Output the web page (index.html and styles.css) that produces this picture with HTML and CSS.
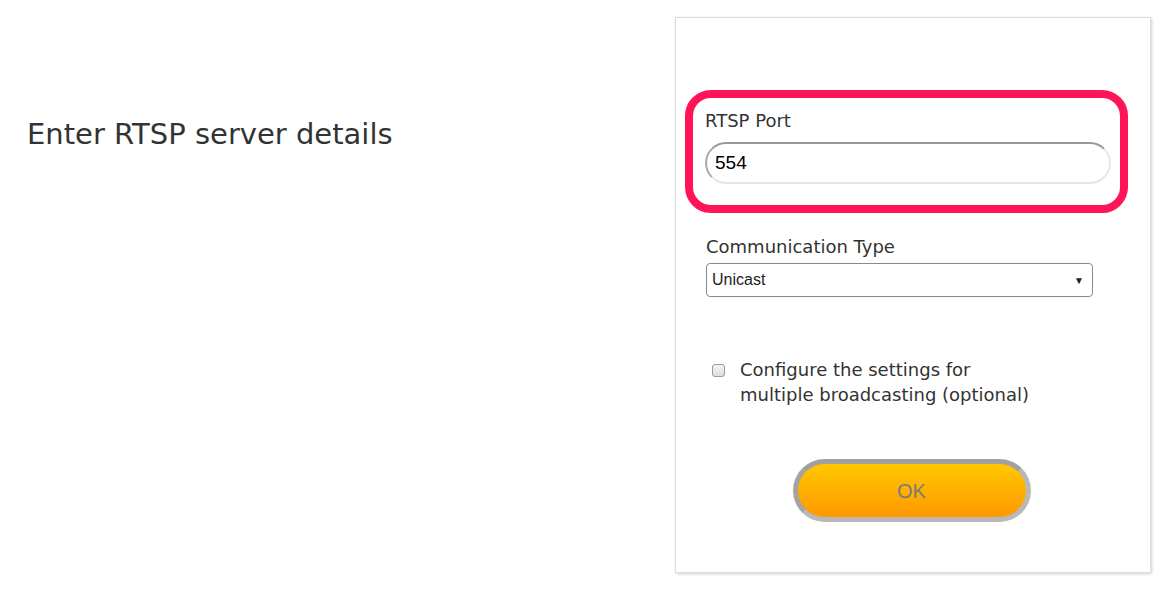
FILE: index.html
```html
<!DOCTYPE html>
<html>
<head>
<meta charset="utf-8">
<link rel="stylesheet" href="styles.css">
</head>
<body>
<div class="page">
  <div class="intro">
    <h1 class="title">Enter RTSP server details</h1>
  </div>
  <div class="panel">
    <div class="highlight">
      <label class="field-label" for="port">RTSP Port</label>
      <input class="text-input" id="port" type="text" value="554">
    </div>
    <div class="field">
      <div class="field-label">Communication Type</div>
      <div class="select">
        <span class="select-value">Unicast</span>
        <span class="select-arrow">▼</span>
      </div>
    </div>
    <div class="check-row">
      <span class="checkbox"></span>
      <span class="check-label">Configure the settings for<br>multiple broadcasting (optional)</span>
    </div>
    <div class="actions">
      <button class="ok-btn">OK</button>
    </div>
  </div>
</div>
</body>
</html>
```

FILE: styles.css
```css
html, body {
  margin: 0;
  padding: 0;
  background: #fff;
}
body {
  font-family: "DejaVu Sans", "Noto Sans", sans-serif;
  color: #333;
}
.page {
  display: flex;
  align-items: flex-start;
  width: 1169px;
  height: 597px;
}
.intro {
  width: 675px;
  flex: none;
}
.title {
  margin: 114px 0 0 27px;
  font-weight: 400;
  font-size: 29px;
  line-height: 40px;
  color: #333;
}
.panel {
  margin-top: 17px;
  width: 476px;
  height: 556px;
  box-sizing: border-box;
  border: 1px solid #dcdcdc;
  box-shadow: 1px 1px 3px rgba(0,0,0,0.18);
  background: #fff;
  padding: 72px 0 0 9px;
}
.highlight {
  width: 443px;
  box-sizing: border-box;
  border: 8px solid #ff1457;
  border-radius: 26px;
  padding: 10px 0 0 12px;
  height: 123px;
}
.field-label {
  display: block;
  font-size: 18px;
  line-height: 26px;
  color: #333;
}
.text-input {
  display: block;
  margin-top: 8px;
  width: 406px;
  height: 42px;
  box-sizing: border-box;
  border-radius: 21px;
  border: 2px solid #e6e6e6;
  border-top-color: #999;
  border-left-color: #aaa;
  padding: 0 0 0 8px;
  font-family: "Liberation Sans", Arial, sans-serif;
  font-size: 19px;
  color: #000;
  background: #fff;
  outline: none;
}
.field {
  margin: 21px 0 0 21px;
}
.select {
  margin-top: 3px;
  width: 387px;
  height: 34px;
  box-sizing: border-box;
  border: 1px solid #8a8a8a;
  border-radius: 4px;
  display: flex;
  align-items: center;
  justify-content: space-between;
  padding: 0 8px 0 5px;
  font-family: "Liberation Sans", Arial, sans-serif;
  font-size: 16px;
  color: #222;
}
.select-arrow {
  font-size: 10px;
  color: #222;
}
.check-row {
  margin: 60px 0 0 27px;
  display: flex;
  align-items: flex-start;
}
.checkbox {
  flex: none;
  width: 11px;
  height: 11px;
  border: 1px solid #9a9a9a;
  border-radius: 3px;
  background: linear-gradient(#f4f4f4, #dedede);
  margin: 7px 15px 0 0;
}
.check-label {
  font-size: 18px;
  line-height: 25px;
  color: #333;
}
.actions {
  display: flex;
  justify-content: center;
  margin-top: 52px;
  padding-right: 12px;
}
.ok-btn {
  width: 238px;
  height: 63px;
  box-sizing: border-box;
  border-radius: 32px;
  border: 5px solid #b8b8b8;
  border-top-color: #a0a0a0;
  border-left-color: #a4a4a4;
  background: linear-gradient(#ffc800, #ff9800);
  font-family: "Liberation Sans", Arial, sans-serif;
  font-size: 20px;
  color: #7a7a7a;
  padding: 2px 0 0;
}
```
